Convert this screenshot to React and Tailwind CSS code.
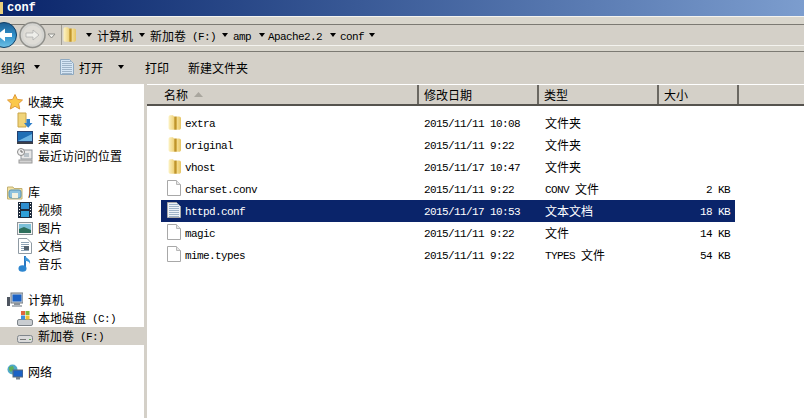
import React from "react";

const Txt = ({ children }) => {
  const parts = String(children).split(/([\x20-\x7e]+)/).filter(Boolean);
  return (
    <span className="whitespace-pre font-['Noto_Sans_CJK_SC',sans-serif] text-[12px] leading-[14px]">
      {parts.map((p, i) =>
        /^[\x20-\x7e]+$/.test(p) ? (
          <span key={i} className="align-[1px] font-['Liberation_Mono',monospace] text-[11px] tracking-[-0.6px]">{p}</span>
        ) : (
          <span key={i}>{p}</span>
        )
      )}
    </span>
  );
};

const Folder = () => (
  <svg width="13" height="15" viewBox="0 0 13 15" className="shrink-0">
    <defs>
      <linearGradient id="fg" x1="0" x2="1" y1="0" y2="0">
        <stop offset="0" stopColor="#fdf3c4" />
        <stop offset="0.45" stopColor="#efd27a" />
        <stop offset="0.5" stopColor="#b58a22" />
        <stop offset="0.62" stopColor="#c99f35" />
        <stop offset="0.7" stopColor="#f4dc8e" />
        <stop offset="1" stopColor="#e6c565" />
      </linearGradient>
    </defs>
    <path d="M0.500 2 C0.500 0.800 1.500 0.300 2.500 0.300 H5 L6 1.500 H11 C12.300 1.500 13 2.300 13 3.500 V13 C13 14.200 12 14.800 11 14.800 H2.500 C1.500 14.800 0.500 14.200 0.500 13 Z" fill="url(#fg)" />
  </svg>
);

const FileIcon = ({ lines, blue }) => (
  <svg width="14" height="16" viewBox="0 0 14 16" className="shrink-0">
    <path d="M0.500 0.500 H9.500 L13.500 4.500 V15.500 H0.500 Z" fill={blue ? "#d6e6f5" : lines ? "#eef3f8" : "#fff"} stroke={blue ? "#8fa9c0" : "#a8a8a8"} />
    {!lines && <path d="M9.500 0.500 V4.500 H13.500" fill="#e6e6e6" stroke="#b8b8b8" />}
    {lines &&
      [2, 4, 6, 8, 10, 12, 14].map((y) => (
        <path key={y} d={`M2 ${y}.5 H12`} stroke="#9fb4c8" />
      ))}
  </svg>
);

const Star = () => (
  <svg width="16" height="16" viewBox="0 0 16 16">
    <path d="M8 0.500 L10.300 5.400 L15.500 6 L11.600 9.600 L12.700 15 L8 12.300 L3.300 15 L4.400 9.600 L0.500 6 L5.700 5.400 Z" fill="#fbc84a" stroke="#e09a3a" />
  </svg>
);
const Download = () => (
  <svg width="16" height="16" viewBox="0 0 16 16">
    <path d="M1 1 H9 V15 H1 Z" fill="#f0d47a" stroke="#c9a548" />
    <path d="M9.500 7 H13 V11 H15.500 L11.200 15.800 L7 11 H9.500 Z" fill="#2f7fc8" />
  </svg>
);
const Desktop = () => (
  <svg width="16" height="14" viewBox="0 0 16 14">
    <rect x="0" y="0" width="16" height="13" fill="#24406e" />
    <rect x="1" y="1" width="14" height="9" fill="#1f6fb5" />
    <path d="M1 10 L15 3 V10 Z" fill="#6cb4e2" />
    <rect x="0" y="11" width="16" height="2" fill="#3b3f48" />
  </svg>
);
const Recent = () => (
  <svg width="16" height="16" viewBox="0 0 16 16">
    <rect x="4" y="2" width="11" height="9" fill="#e8e8e8" stroke="#8f969c" />
    <rect x="7" y="5" width="5" height="4" fill="#b9c2c8" />
    <circle cx="4" cy="4" r="3.500" fill="#f1f1f1" stroke="#8a8a8a" />
    <path d="M4 2 V4 H6" stroke="#666" fill="none" />
    <rect x="2" y="12" width="13" height="3" fill="#d4d4d4" stroke="#9a9a9a" />
  </svg>
);
const Library = () => (
  <svg width="16" height="15" viewBox="0 0 16 15">
    <path d="M0.500 2 H6 L7 3.500 H15 V14 H0.500 Z" fill="#f4e3a2" stroke="#c2b072" />
    <rect x="2" y="5" width="12" height="8" rx="2" fill="#8fc3de" stroke="#5d93b3" />
    <rect x="5" y="8" width="6" height="5" fill="#f4f2e0" />
  </svg>
);
const Video = () => (
  <svg width="14" height="16" viewBox="0 0 14 16">
    <rect x="0" y="0" width="14" height="16" fill="#1e2b3c" />
    <rect x="3" y="1" width="8" height="6" fill="#2f8fd0" />
    <rect x="3" y="9" width="8" height="6" fill="#2fa0d8" />
    {[1, 4, 7, 10, 13].map((y) => (
      <React.Fragment key={y}>
        <rect x="1" y={y} width="1" height="1" fill="#fff" />
        <rect x="12" y={y} width="1" height="1" fill="#fff" />
      </React.Fragment>
    ))}
  </svg>
);
const Picture = () => (
  <svg width="16" height="13" viewBox="0 0 16 13">
    <rect x="0.500" y="0.500" width="15" height="12" fill="#f2f2f2" stroke="#8d9499" />
    <rect x="2" y="2" width="12" height="9" fill="#7cc0d8" />
    <path d="M2 11 V7 L7 5 L14 8 V11 Z" fill="#2e6f5c" />
  </svg>
);
const Doc = () => (
  <svg width="14" height="16" viewBox="0 0 14 16">
    <path d="M0.500 0.500 H9 L13.500 5 V15.500 H0.500 Z" fill="#fff" stroke="#8f9aa3" />
    {[4, 6, 8, 10, 12].map((y) => (
      <path key={y} d={`M3 ${y}.5 H11`} stroke="#8ea3b5" />
    ))}
    <rect x="6" y="8" width="5" height="4" fill="#53616d" />
  </svg>
);
const Music = () => (
  <svg width="14" height="16" viewBox="0 0 14 16">
    <path d="M7 0 V12" stroke="#2a78c2" strokeWidth="2" />
    <path d="M7 0 C9 3 13 3 12 8 C11 5 9 5 7 5 Z" fill="#3e98da" />
    <ellipse cx="4.500" cy="12.500" rx="4" ry="3.200" fill="#2d86d0" />
  </svg>
);
const Computer = () => (
  <svg width="16" height="16" viewBox="0 0 16 16">
    <rect x="0" y="5" width="3" height="9" fill="#4e5560" />
    <rect x="4" y="1" width="12" height="10" fill="#c8d0d8" stroke="#707880" />
    <rect x="5.500" y="2.500" width="9" height="7" fill="#1c62c4" />
    <rect x="7" y="11" width="6" height="2" fill="#8a929a" />
    <rect x="5" y="13" width="10" height="2" fill="#b0b6bc" />
  </svg>
);
const DriveC = () => (
  <svg width="16" height="16" viewBox="0 0 16 16">
    <rect x="0.500" y="9.500" width="15" height="6" rx="1.500" fill="#c9cdd1" stroke="#7d848a" />
    <rect x="4" y="1" width="4" height="4" fill="#e2643c" />
    <rect x="8.500" y="1" width="4" height="4" fill="#7fb93c" />
    <rect x="4" y="5.500" width="4" height="4" fill="#3c8fdc" />
    <rect x="8.500" y="5.500" width="4" height="4" fill="#f0c132" />
  </svg>
);
const DriveF = () => (
  <svg width="16" height="8" viewBox="0 0 16 8" className="mt-[5px]">
    <rect x="0.500" y="0.500" width="15" height="7" rx="2" fill="#dadada" stroke="#80868c" />
    <path d="M3 4.500 H9" stroke="#777" />
    <rect x="12" y="4" width="2" height="1" fill="#5cb050" />
  </svg>
);
const Network = () => (
  <svg width="16" height="16" viewBox="0 0 16 16">
    <circle cx="5.500" cy="5.500" r="5" fill="#4fa8c8" />
    <path d="M2 3 L6 2 L7 5 L4 8 L2 6 Z" fill="#5fb05a" />
    <rect x="6" y="6" width="10" height="7" fill="#1c62c4" stroke="#5a6a78" />
    <rect x="9" y="13" width="4" height="2.500" fill="#77808a" />
  </svg>
);

const Caret = ({ className = "" }) => (
  <svg width="6" height="4" viewBox="0 0 6 4" className={`shrink-0 ${className}`}>
    <path d="M0 0 H6 L3 4 Z" fill="#000" />
  </svg>
);

const NavRow = ({ icon, children, level = 1, active }) => (
  <div className={`flex h-[18px] items-center ${active ? "bg-[#d4d0c8]" : ""}`}>
    <div className={`mr-[5px] flex w-[16px] items-center justify-center ${level === 1 ? "ml-[7px]" : "ml-[17px]"}`}>{icon}</div>
    <Txt>{children}</Txt>
  </div>
);

const Spacer = () => <div className="h-[18px]" />;

const files = [
  { n: "extra", d: "2015/11/11 10:08", t: "文件夹", i: "f" },
  { n: "original", d: "2015/11/11 9:22", t: "文件夹", i: "f" },
  { n: "vhost", d: "2015/11/17 10:47", t: "文件夹", i: "f" },
  { n: "charset.conv", d: "2015/11/11 9:22", t: "CONV 文件", s: "2 KB", i: "d" },
  { n: "httpd.conf", d: "2015/11/17 10:53", t: "文本文档", s: "18 KB", i: "t", sel: true },
  { n: "magic", d: "2015/11/11 9:22", t: "文件", s: "14 KB", i: "d" },
  { n: "mime.types", d: "2015/11/11 9:22", t: "TYPES 文件", s: "54 KB", i: "d" },
];

const Head = ({ w, children, pl = "pl-[5px]" }) => (
  <div className={`flex h-[19px] items-center border-r-2 border-r-[#6b6862] ${pl} ${w}`}>{children}</div>
);

export default function App() {
  return (
    <div className="flex h-[418px] w-[804px] flex-col overflow-hidden bg-[#d4d0c8] text-black">
      {/* title bar */}
      <div className="flex h-[16px] items-center gap-[4px] bg-gradient-to-r from-[#0a246a] to-[#7c9dce]">
        <div className="h-[12px] w-[3px] bg-[#e8cf7c]" />
        <span className="whitespace-pre font-['Liberation_Mono',monospace] text-[12px] font-bold text-white">conf</span>
      </div>
      <div className="h-[1px] bg-[#f4f3ef]" />
      <div className="h-[7px] bg-[#d9d6cd]" />
      <div className="h-[1px] bg-[#7c7a73]" />
      {/* address bar */}
      <div className="flex h-[20px] items-start bg-[#d4d0c8]">
        <div className="relative h-[20px] w-[61px] shrink-0">
          <svg width="61" height="26" viewBox="0 0 61 26" className="overflow-visible">
            <defs>
              <linearGradient id="bk" x1="0" y1="0" x2="0" y2="1">
                <stop offset="0" stopColor="#1d5d92" />
                <stop offset="0.5" stopColor="#2f8fc8" />
                <stop offset="1" stopColor="#6ec1e6" />
              </linearGradient>
            </defs>
            <circle cx="4" cy="10" r="12.500" fill="url(#bk)" stroke="#103f66" />
            <path d="M-3 10 L5 3.500 V8 H12 V12 H5 V16.500 Z" fill="#fff" />
            <circle cx="32.500" cy="10" r="12.500" fill="#d4d4d0" stroke="#8f8f8a" strokeWidth="1.500" />
            <circle cx="32.500" cy="10" r="9.500" fill="#dedcd6" />
            <path d="M39 10 L33 5 V8 H26 V12 H33 V15 Z" fill="#eeeeea" stroke="#aaa" strokeWidth="0.700" />
            <path d="M48 9 H55 L51.500 13 Z" fill="#f2f2ee" stroke="#8f8f8a" />
          </svg>
        </div>
        <div className="flex h-[20px] flex-1 items-center border-l border-l-[#a09c92] pb-[1px] pl-[1px]">
          <Folder />
          <Caret className="ml-[10px]" />
          <div className="ml-[5px]"><Txt>计算机</Txt></div>
          <Caret className="ml-[6px]" />
          <div className="ml-[5px]"><Txt>新加卷 (F:)</Txt></div>
          <Caret className="ml-[6px]" />
          <div className="ml-[5px]"><Txt>amp</Txt></div>
          <Caret className="ml-[8px]" />
          <div className="ml-[3px]"><Txt>Apache2.2</Txt></div>
          <Caret className="ml-[8px]" />
          <div className="ml-[4px]"><Txt>conf</Txt></div>
          <Caret className="ml-[5px]" />
        </div>
      </div>
      <div className="h-[1px] bg-[#f4f3ef]" />
      <div className="h-[5px] bg-[#d9d6cd]" />
      <div className="h-[1px] bg-[#7c7a73]" />
      {/* toolbar */}
      <div className="flex h-[32px] items-center pb-[2px]">
        <div className="ml-[1px]"><Txt>组织</Txt></div>
        <Caret className="ml-[9px]" />
        <div className="ml-[20px]"><FileIcon lines blue /></div>
        <div className="ml-[5px]"><Txt>打开</Txt></div>
        <Caret className="ml-[15px]" />
        <div className="ml-[21px]"><Txt>打印</Txt></div>
        <div className="ml-[19px]"><Txt>新建文件夹</Txt></div>
      </div>
      {/* body */}
      <div className="flex min-h-0 flex-1">
        <aside className="w-[144px] shrink-0 bg-white pt-[9px]">
          <NavRow icon={<Star />}>收藏夹</NavRow>
          <NavRow level={2} icon={<Download />}>下载</NavRow>
          <NavRow level={2} icon={<Desktop />}>桌面</NavRow>
          <NavRow level={2} icon={<Recent />}>最近访问的位置</NavRow>
          <Spacer />
          <NavRow icon={<Library />}>库</NavRow>
          <NavRow level={2} icon={<Video />}>视频</NavRow>
          <NavRow level={2} icon={<Picture />}>图片</NavRow>
          <NavRow level={2} icon={<Doc />}>文档</NavRow>
          <NavRow level={2} icon={<Music />}>音乐</NavRow>
          <Spacer />
          <NavRow icon={<Computer />}>计算机</NavRow>
          <NavRow level={2} icon={<DriveC />}>本地磁盘 (C:)</NavRow>
          <NavRow level={2} active icon={<DriveF />}>新加卷 (F:)</NavRow>
          <Spacer />
          <NavRow icon={<Network />}>网络</NavRow>
        </aside>
        <div className="w-[3px] shrink-0" />
        <main className="flex min-w-0 flex-1 flex-col bg-white">
          <div className="flex h-[22px] shrink-0 border-b-2 border-b-[#55534e] border-t border-t-white bg-[#d4d0c8]">
            <Head w="w-[272px]" pl="pl-[17px]">
              <Txt>名称</Txt>
              <svg width="9" height="5" viewBox="0 0 9 5" className="ml-[6px]"><path d="M0 5 L4.500 0 L9 5 Z" fill="#a9a69e" /></svg>
            </Head>
            <Head w="w-[120px]"><Txt>修改日期</Txt></Head>
            <Head w="w-[120px]"><Txt>类型</Txt></Head>
            <Head w="w-[80px]"><Txt>大小</Txt></Head>
          </div>
          <div className="flex flex-col pt-[6px]">
            {files.map((f) => (
              <div key={f.n} className={`ml-[14px] flex h-[22px] w-[574px] items-center pb-[2px] ${f.sel ? "bg-[#0a246a] text-white" : ""}`}>
                <div className="ml-[5px] flex w-[16px] justify-center">
                  {f.i === "f" ? <Folder /> : <FileIcon lines={f.i === "t"} />}
                </div>
                <div className="ml-[3px] w-[239px]"><Txt>{f.n}</Txt></div>
                <div className="w-[121px]"><Txt>{f.d}</Txt></div>
                <div className="w-[120px]"><Txt>{f.t}</Txt></div>
                <div className="w-[65px] text-right"><Txt>{f.s || ""}</Txt></div>
              </div>
            ))}
          </div>
        </main>
      </div>
    </div>
  );
}
